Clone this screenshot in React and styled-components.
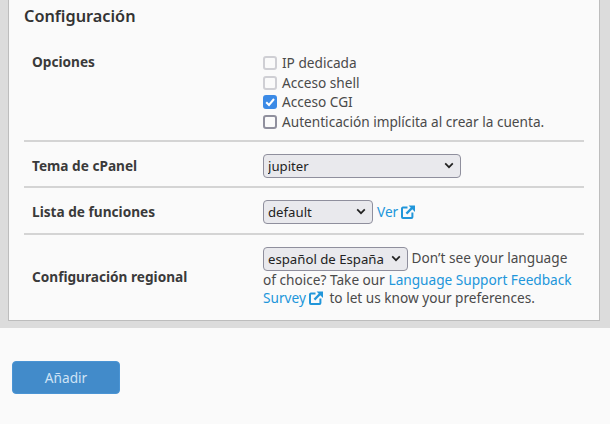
import React from "react";
import styled, { createGlobalStyle } from "styled-components";

const chevron = `url("data:image/svg+xml,%3Csvg xmlns='http://www.w3.org/2000/svg' width='10' height='7' viewBox='0 0 10 7'%3E%3Cpath d='M1.2 1.4 5 5.2l3.8-3.8' fill='none' stroke='%23222' stroke-width='1.7'/%3E%3C/svg%3E")`;
const tick = `url("data:image/svg+xml,%3Csvg xmlns='http://www.w3.org/2000/svg' width='14' height='14' viewBox='0 0 14 14'%3E%3Cpath d='M3.2 7.2 6 10l5-6' fill='none' stroke='%23fff' stroke-width='2'/%3E%3C/svg%3E")`;

const Global = createGlobalStyle`
  html, body { margin: 0; padding: 0; background: #fafafa; }
  body { width: 610px; height: 424px; overflow: hidden; font-family: "Noto Sans", sans-serif; font-size: 13.65px; color: #333; }
`;
const Band = styled.div`
  background: #dcdcdc;
  padding: 0 10px 7px 8px;
  height: 328px;
  box-sizing: border-box;
`;
const Panel = styled.section`
  background: #fafafa;
  border: 1px solid #bdbdbd;
  border-top: 0;
  height: 321px;
  box-sizing: border-box;
  padding: 5px 15px 0 15px;
`;
const Title = styled.h2`
  margin: 0 0 24px;
  font-size: 16.3px;
  line-height: 22px;
  font-weight: 600;
  color: #333;
`;
const Row = styled.div`
  display: grid;
  grid-template-columns: 231px 1fr;
  padding: ${(p) => p.$pad};
  align-items: ${(p) => p.$align || "center"};
  border-bottom: ${(p) => (p.$last ? "0" : "2px solid #d4d4d4")};
`;
const Label = styled.div`
  font-weight: 700;
  line-height: 20px;
  color: #3a3a3a;
  padding-top: ${(p) => p.$top || 0}px;
`;
const Options = styled.div`
  display: flex;
  flex-direction: column;
  padding-top: 2px;
`;
const Option = styled.label`
  display: flex;
  align-items: center;
  height: 19.7px;
  gap: 5px;
  color: #4a4a4a;
  line-height: 20px;
`;
const Check = styled.input.attrs({ type: "checkbox" })`
  appearance: none;
  margin: 0;
  width: 14px;
  height: 14px;
  box-sizing: border-box;
  border-radius: 3px;
  border: 2px solid ${(p) => (p.disabled ? "#cfcfd4" : "#8f8f9d")};
  background: #fafafa;
  &:checked {
    border: 0;
    background: #3b8ae6 ${tick} center no-repeat;
  }
`;
const Select = styled.select`
  appearance: none;
  font-family: "Noto Sans", sans-serif;
  font-size: 13.2px;
  height: 24px;
  width: ${(p) => p.$w}px;
  color: #222;
  vertical-align: middle;
  padding: 0 0 0 4px;
  box-sizing: border-box;
  background: #e9e9ed ${chevron} right 6px center no-repeat;
  border: 1px solid #8f8f9d;
  border-radius: 4px;
`;
const Inline = styled.div`
  display: flex;
  align-items: center;
  gap: 4px;
`;
const Link = styled.a`
  color: #2196da;
  text-decoration: none;
`;
const Ext = styled.svg`
  width: 14px;
  height: 14px;
  vertical-align: -2px;
  margin: 0 ${(p) => p.$after || 0}px 0 3px;
`;
const Para = styled.div`
  line-height: 18px;
  color: #4a4a4a;
  padding-right: 10px;
`;
const Footer = styled.div`
  padding: 33px 12px 0;
`;
const Button = styled.button`
  width: 108px;
  height: 33px;
  background: #428bca;
  border: 1px solid #4a94d4;
  border-radius: 4px;
  color: #cfe3f5;
  font-family: "Noto Sans", sans-serif;
  font-size: 13.65px;
  padding: 0;
`;
const ExtIcon = ({ after }) => (
  <Ext viewBox="0 0 14 14" fill="none" stroke="#2196da" $after={after}>
    <path d="M6.5 2.6H1.9a.9.9 0 0 0-.9.9v8.6a.9.9 0 0 0 .9.9h8.6a.9.9 0 0 0 .9-.9V7.5" strokeWidth="2" />
    <path d="M5.4 8.6 11.6 2.4" strokeWidth="2.2" />
    <path d="M7.6 0.6H14V7z" fill="#2196da" stroke="none" />
  </Ext>
);

export default function App() {
  return (
    <>
      <Global />
      <Band>
        <Panel>
          <Title>Configuración</Title>
          <Row $align="start" $pad="0 0 8px 8px">
            <Label $top={1}>Opciones</Label>
            <Options>
              <Option><Check disabled /> IP dedicada</Option>
              <Option><Check disabled /> Acceso shell</Option>
              <Option><Check defaultChecked /> Acceso CGI</Option>
              <Option><Check /> Autenticación implícita al crear la cuenta.</Option>
            </Options>
          </Row>
          <Row $pad="12px 0 8px 8px">
            <Label>Tema de cPanel</Label>
            <Select $w={198} defaultValue="jupiter"><option>jupiter</option></Select>
          </Row>
          <Row $pad="12px 0 9px 8px">
            <Label>Lista de funciones</Label>
            <Inline>
              <Select $w={110} defaultValue="default"><option>default</option></Select>
              <Link href="#">Ver<ExtIcon /></Link>
            </Inline>
          </Row>
          <Row $last $pad="12px 0 0 8px">
            <Label>Configuración regional</Label>
            <Para>
              <Select $w={145} defaultValue="es"><option value="es">español de España</option></Select>{" "}
              Don’t see your language of choice? Take our{" "}
              <Link href="#">Language Support Feedback Survey<ExtIcon after={3} /></Link>{" "}
              to let us know your preferences.
            </Para>
          </Row>
        </Panel>
      </Band>
      <Footer>
        <Button>Añadir</Button>
      </Footer>
    </>
  );
}
